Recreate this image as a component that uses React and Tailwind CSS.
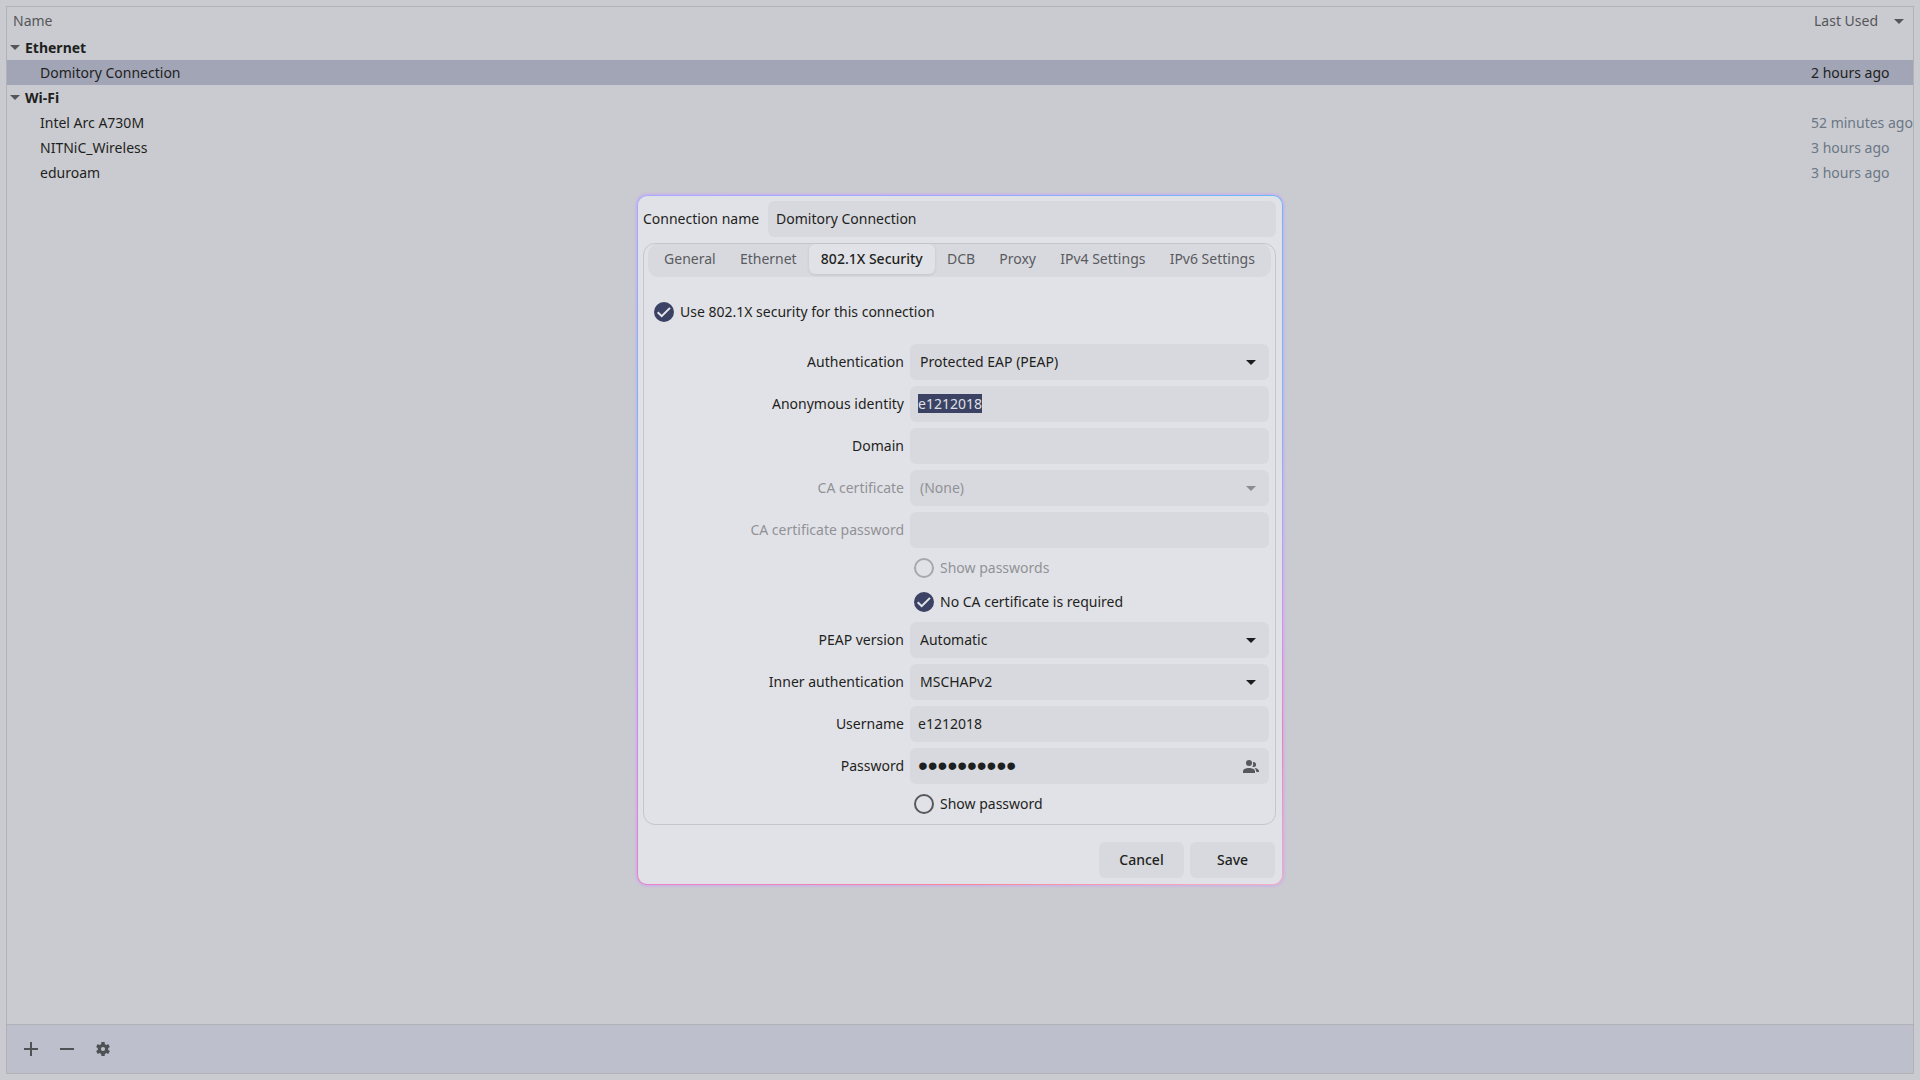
import { useEffect, useRef, useState } from "react";
import clsx from "clsx";

const groups = [
  { name: "Ethernet", items: [{ name: "Domitory Connection", used: "2 hours ago", selected: true }] },
  {
    name: "Wi-Fi",
    items: [
      { name: "Intel Arc A730M", used: "52 minutes ago" },
      { name: "NITNiC_Wireless", used: "3 hours ago" },
      { name: "eduroam", used: "3 hours ago" },
    ],
  },
];

const tabs = ["General", "Ethernet", "802.1X Security", "DCB", "Proxy", "IPv4 Settings", "IPv6 Settings"];

function Arrow({ className }) {
  return (
    <svg viewBox="0 0 10 5" className={clsx("h-[5px] w-2.5 shrink-0", className)} fill="currentColor" aria-hidden="true">
      <path d="M0 0h10L5 5z" />
    </svg>
  );
}

function GearIcon() {
  return (
    <svg viewBox="0 0 14 14" className="size-3.5" aria-hidden="true">
      <g stroke="currentColor" strokeWidth="3.4">
        <path d="M7 0v4M7 10v4" />
        <path d="M7 0v4M7 10v4" transform="rotate(60 7 7)" />
        <path d="M7 0v4M7 10v4" transform="rotate(120 7 7)" />
      </g>
      <circle cx="7" cy="7" r="3.7" fill="none" stroke="currentColor" strokeWidth="3.2" />
    </svg>
  );
}

function UsersIcon() {
  return (
    <svg viewBox="0 0 16 13" className="h-[13px] w-4" fill="currentColor" aria-hidden="true">
      <circle cx="6" cy="3" r="3" />
      <path d="M0 13v-1.6C0 9 3 8 6 8s6 1 6 3.400V13z" />
      <path d="M9.300 6.700A4.800 4.800 0 0 0 9.900 2.200a2.500 2.500 0 1 1-.6 4.500z" />
      <path d="M11.400 8.100c2.600.2 4.600 1.300 4.600 3.100V12h-2.700c0-1.700-.8-3-1.900-3.900z" />
    </svg>
  );
}

function Check({ label, defaultChecked, disabled }) {
  return (
    <label className={clsx("flex h-[34px] items-center gap-1.5", disabled && "text-[#919296]")}>
      <span className="relative grid size-5 place-items-center">
        <input
          type="checkbox"
          defaultChecked={defaultChecked}
          disabled={disabled}
          className="peer size-5 appearance-none rounded-full border-2 border-[#57585b] checked:border-[#3c4263] checked:bg-[#3c4263] disabled:border-[#a7a8ac]"
        />
        <svg viewBox="0 0 20 20" className="pointer-events-none absolute size-5 opacity-0 peer-checked:opacity-100" fill="none" stroke="#e6e7ec" strokeWidth="2" aria-hidden="true">
          <path d="M3.700 10.200l4 4 8.300-8.300" />
        </svg>
      </span>
      {label}
    </label>
  );
}

const fieldBox = "h-9 w-full min-w-0 rounded-md bg-[#d8d9de] outline-none";
const textBox = "px-2 pb-0.5";

function Row({ id, label, disabled, children }) {
  return (
    <div className="grid h-[42px] grid-cols-[250px_1fr] items-center gap-x-1.5">
      <label htmlFor={id} className={clsx("text-right", disabled && "text-[#919296]")}>
        {label}
      </label>
      <div className="relative flex items-center">{children}</div>
    </div>
  );
}

function SelectRow({ id, label, value, disabled }) {
  return (
    <Row id={id} label={label} disabled={disabled}>
      <select id={id} disabled={disabled} className={clsx(fieldBox, "appearance-none px-2.5 disabled:text-[#919296] disabled:opacity-100")}>
        <option>{value}</option>
      </select>
      <Arrow className={clsx("pointer-events-none absolute right-[13px]", disabled ? "text-[#8b8c90]" : "text-[#1b1c1e]")} />
    </Row>
  );
}

function CheckRow(props) {
  return (
    <div className="grid grid-cols-[250px_1fr] gap-x-1.5">
      <div className="col-start-2 pl-1">
        <Check {...props} />
      </div>
    </div>
  );
}

function ConnectionList() {
  return (
    <table className="w-full table-fixed text-left">
      <colgroup>
        <col />
        <col className="w-[104px]" />
      </colgroup>
      <thead>
        <tr className="h-7 text-[#555659]">
          <th className="p-0 pl-1.5 font-normal">Name</th>
          <th className="p-0 font-normal">
            <button type="button" className="flex w-full items-center justify-between pr-[9px] pl-[5px]">
              Last Used
              <Arrow />
            </button>
          </th>
        </tr>
      </thead>
      {groups.map((group) => (
        <tbody key={group.name}>
          <tr className="h-[25px]">
            <th colSpan={2} scope="rowgroup" className="p-0 pl-[3px]">
              <button type="button" aria-expanded="true" className="flex items-center gap-[5px] font-bold">
                <Arrow className="text-[#55565a]" />
                {group.name}
              </button>
            </th>
          </tr>
          {group.items.map((item) => (
            <tr key={item.name} className={clsx("h-[25px]", item.selected && "bg-[#a2a5b5]")}>
              <td className="p-0 pl-[33px]">{item.name}</td>
              <td className={clsx("p-0 pl-0.5 whitespace-nowrap", !item.selected && "text-[#6b7785]")}>{item.used}</td>
            </tr>
          ))}
        </tbody>
      ))}
    </table>
  );
}

function Toolbar() {
  const button = "grid size-9 place-items-center";
  return (
    <div className="flex h-[49px] items-center border-t border-[#b1b2b6] bg-[#bdbfcd] px-1.5 text-[#4f5154]">
      <button type="button" aria-label="Add" className={button}>
        <svg viewBox="0 0 14 14" className="size-3.5" stroke="currentColor" strokeWidth="2" aria-hidden="true">
          <path d="M7 0v14M0 7h14" />
        </svg>
      </button>
      <button type="button" aria-label="Remove" className={button}>
        <svg viewBox="0 0 14 14" className="size-3.5" stroke="currentColor" strokeWidth="2" aria-hidden="true">
          <path d="M0 7h14" />
        </svg>
      </button>
      <button type="button" aria-label="Settings" className={button}>
        <GearIcon />
      </button>
    </div>
  );
}

function EditDialog() {
  const [tab, setTab] = useState("802.1X Security");
  const identity = useRef(null);
  useEffect(() => {
    identity.current.focus();
    identity.current.select();
  }, []);

  return (
    <div
      role="dialog"
      aria-label="Editing Domitory Connection"
      className="w-[646px] max-w-full rounded-[10px] bg-[conic-gradient(#9fa8ff,#6ab8f8_40deg,#74b8f8_65deg,#b0a4f6_90deg,#dc8ce6_108deg,#f27fb4_122deg,#f4b0c4_138deg,#fa8298_180deg,#ea80cc_225deg,#c48cf6_245deg,#a0a4ff_270deg,#6cb8f8_295deg,#a8aaff_318deg,#9fa8ff)] p-px shadow-[0_0_3px_1px_#c8aaf0]"
    >
      <form className="rounded-[9px] bg-[#e1e2e7] py-1.5 pr-1.5 pl-[5px]" onSubmit={(e) => e.preventDefault()}>
        <div className="-mt-px grid grid-cols-[119px_1fr] items-center gap-x-1.5">
          <label htmlFor="name">Connection name</label>
          <input id="name" type="text" defaultValue="Domitory Connection" className={clsx(fieldBox, textBox)} />
        </div>

        <div className="mt-1.5 rounded-xl border border-[#c5c6cb] pb-[3px]">
          <div role="tablist" className="mx-1 flex h-[33px] rounded-[10px] bg-[#d8d9de] px-1 pb-[3px] text-[#5a5b5f]">
            {tabs.map((name) => (
              <button
                key={name}
                type="button"
                role="tab"
                aria-selected={name === tab}
                onClick={() => setTab(name)}
                className={clsx(
                  "flex-auto rounded-md px-2 whitespace-nowrap",
                  name === tab && "bg-[#e1e2e7] font-medium text-[#1e1f21] shadow-[0_1px_3px_rgba(0,0,0,0.1)]",
                )}
              >
                {name}
              </button>
            ))}
          </div>

          <div className="mt-[18px] pr-1.5 pl-2.5">
            <Check label="Use 802.1X security for this connection" defaultChecked />
            <div className="mt-3">
              <SelectRow id="auth" label="Authentication" value="Protected EAP (PEAP)" />
              <Row id="identity" label="Anonymous identity">
                <input
                  ref={identity}
                  id="identity"
                  type="text"
                  defaultValue="e1212018"
                  className={clsx(fieldBox, textBox, "selection:bg-[#3c4263] selection:text-[#dfe0e6]")}
                />
              </Row>
              <Row id="domain" label="Domain">
                <input id="domain" type="text" className={clsx(fieldBox, textBox)} />
              </Row>
              <SelectRow id="ca" label="CA certificate" value="(None)" disabled />
              <Row id="ca-password" label="CA certificate password" disabled>
                <input id="ca-password" type="password" disabled className={clsx(fieldBox, textBox)} />
              </Row>
              <CheckRow label="Show passwords" disabled />
              <CheckRow label="No CA certificate is required" defaultChecked />
              <SelectRow id="peap" label="PEAP version" value="Automatic" />
              <SelectRow id="inner" label="Inner authentication" value="MSCHAPv2" />
              <Row id="username" label="Username">
                <input id="username" type="text" defaultValue="e1212018" className={clsx(fieldBox, textBox)} />
              </Row>
              <Row id="password" label="Password">
                <input
                  id="password"
                  type="password"
                  defaultValue="0123456789"
                  className={clsx(fieldBox, "pr-9 pl-2 font-['Liberation_Sans',sans-serif] text-[28px]")}
                />
                <button type="button" aria-label="Password storage" className="absolute right-2.5 text-[#57585b]">
                  <UsersIcon />
                </button>
              </Row>
              <CheckRow label="Show password" />
            </div>
          </div>
        </div>

        <div className="mt-[17px] flex justify-end gap-1.5 pr-px font-medium">
          <button type="button" className="h-9 w-[85px] rounded-md bg-[#d8d9de]">
            Cancel
          </button>
          <button type="submit" className="h-9 w-[85px] rounded-md bg-[#d8d9de]">
            Save
          </button>
        </div>
      </form>
    </div>
  );
}

export default function App() {
  return (
    <div className="flex h-screen flex-col bg-[#cacbd0] p-1.5 font-['Noto_Sans',sans-serif] text-sm text-[#1e1f21]">
      <main className="flex flex-1 flex-col border border-[#b1b2b6]">
        <div className="flex-1">
          <ConnectionList />
        </div>
        <Toolbar />
      </main>
      <div className="fixed inset-0 grid place-items-center">
        <EditDialog />
      </div>
    </div>
  );
}
